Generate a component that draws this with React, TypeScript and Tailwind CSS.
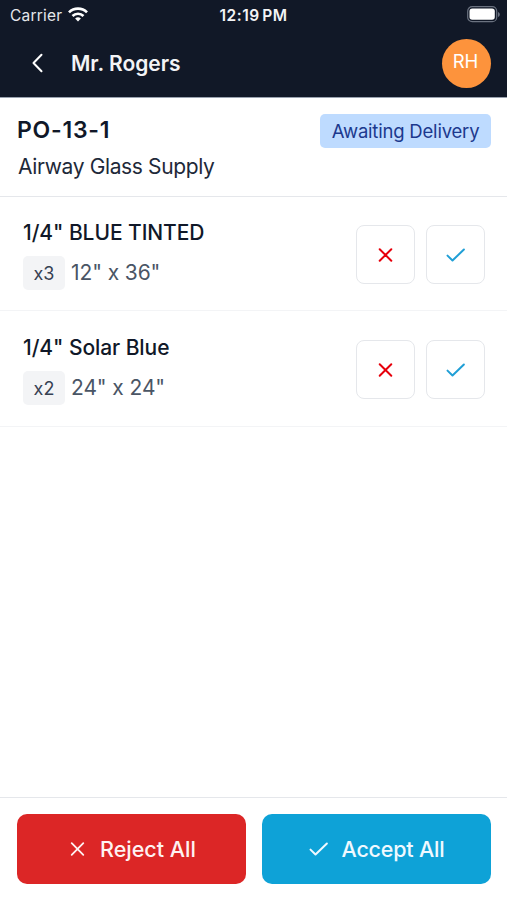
import React from 'react';

interface LineItem {
  id: number;
  name: string;
  qty: number;
  size: string;
}

const items: LineItem[] = [
  { id: 1, name: '1/4" BLUE TINTED', qty: 3, size: '12" x 36"' },
  { id: 2, name: '1/4" Solar Blue', qty: 2, size: '24" x 24"' },
];

interface IconProps {
  className?: string;
}

function CrossIcon({ className }: IconProps) {
  return (
    <svg viewBox="0 0 16 16" fill="none" stroke="currentColor" strokeLinecap="round" className={className}>
      <path d="M1.700 2.200l11.600 11.600M13.300 2.200L1.700 13.800" />
    </svg>
  );
}

function CheckIcon({ className }: IconProps) {
  return (
    <svg
      viewBox="0 0 20 16"
      fill="none"
      stroke="currentColor"
      strokeLinecap="round"
      strokeLinejoin="round"
      className={className}
    >
      <path d="M1.500 8.600l5 4.900L17.900 2.500" />
    </svg>
  );
}

function StatusBar() {
  return (
    <div className="grid h-[30px] grid-cols-3 items-center pl-[10px] pr-[7px] text-gray-200">
      <div className="flex items-center gap-[6px]">
        <span className="pt-px text-[15.5px] leading-none tracking-[0.2px]">Carrier</span>
        <svg viewBox="0 0 20 15" className="-mt-[2px] h-[15px] w-[20px]" fill="none" stroke="white" strokeWidth="2.7">
          <path d="M1 5.4a12.8 12.8 0 0 1 18 0" />
          <path d="M4.5 9a7.8 7.8 0 0 1 11 0" />
          <path d="M10 14.6l-2.9-3a4.1 4.1 0 0 1 5.8 0z" fill="white" stroke="none" />
        </svg>
      </div>
      <span className="-ml-[3px] whitespace-nowrap pt-px text-center text-[15.5px] font-semibold leading-none tracking-[0.55px] text-gray-100 [word-spacing:-2px]">
        12:19 PM
      </span>
      <svg viewBox="0 0 33 17" className="-mt-[2px] h-[17px] w-[33px] justify-self-end">
        <rect x="0.7" y="0.7" width="29" height="15" rx="4.5" fill="none" stroke="#6b7280" strokeWidth="1.2" />
        <rect x="2.5" y="2.6" width="25.3" height="11.2" rx="2.8" fill="white" />
        <path d="M31 6v5c1.2-.5 1.8-1.4 1.8-2.5S32.200 6.500 31 6z" fill="#6b7280" />
      </svg>
    </div>
  );
}

function NavBar() {
  return (
    <div className="flex h-[67px] items-center pb-px pl-[31px] pr-4">
      <svg
        viewBox="0 0 12 20"
        className="h-5 w-3 text-white"
        fill="none"
        stroke="currentColor"
        strokeWidth="2"
        strokeLinecap="round"
        strokeLinejoin="round"
      >
        <path d="M10.500 1.800L2.500 10l8 8.200" />
      </svg>
      <h1 className="ml-[28px] flex-1 text-[21px] font-semibold leading-none text-gray-100">Mr. Rogers</h1>
      <div className="flex h-[49px] w-[49px] items-center justify-center rounded-full bg-[#fd933c] pb-[3px] pr-[2px] text-[18.5px] leading-none text-white">
        RH
      </div>
    </div>
  );
}

function ItemRow({ item }: { item: LineItem }) {
  return (
    <li className="flex h-[115px] items-start justify-between border-b border-gray-100 pl-[23px] pr-[22px] pt-[23px] last:h-[116px]">
      <div>
        <p className="text-[21px] font-medium leading-[28px] tracking-[-0.07px] text-gray-900">{item.name}</p>
        <div className="mt-[9px] flex items-center gap-[6px]">
          <span className="flex h-[34px] w-[42px] items-center justify-center rounded-[5px] bg-gray-100 text-[18px] text-gray-700">
            x{item.qty}
          </span>
          <span className="pb-px text-[21px] leading-none tracking-[-0.1px] text-gray-600">{item.size}</span>
        </div>
      </div>
      <div className="flex gap-[11px] pt-[6px]">
        <button
          aria-label="Reject"
          className="flex h-[59px] w-[59px] items-center justify-center rounded-lg border border-gray-200 text-red-600"
        >
          <CrossIcon className="h-4 w-4 stroke-2" />
        </button>
        <button
          aria-label="Accept"
          className="flex h-[59px] w-[59px] items-center justify-center rounded-lg border border-gray-200 text-[#209fd6]"
        >
          <CheckIcon className="h-4 w-5 stroke-2" />
        </button>
      </div>
    </li>
  );
}

export default function App() {
  return (
    <div className="flex h-[900px] w-[507px] flex-col overflow-hidden bg-white font-['Inter','Liberation_Sans',sans-serif]">
      <header className="h-[98px] shrink-0 border-b border-gray-400 bg-[#111827]">
        <StatusBar />
        <NavBar />
      </header>

      <section className="flex h-[99px] shrink-0 items-start justify-between border-b border-gray-200 pl-[17px] pr-4 pt-4">
        <div>
          <h2 className="text-[23px] font-semibold leading-[32px] tracking-[0.75px] text-gray-900">PO-13-1</h2>
          <p className="mt-[7px] pl-px text-[21px] leading-[28px] tracking-[-0.36px] text-gray-800">
            Airway Glass Supply
          </p>
        </div>
        <span className="flex h-[34px] w-[171px] items-center justify-center rounded-[5px] bg-blue-200 pt-px text-[18.5px] tracking-[-0.2px] text-blue-900">
          Awaiting Delivery
        </span>
      </section>

      <ul className="-mt-px flex-1">
        {items.map((item) => (
          <ItemRow key={item.id} item={item} />
        ))}
      </ul>

      <footer className="grid h-[103px] shrink-0 grid-cols-2 items-start gap-4 border-t border-gray-200 pl-[17px] pr-4 pt-4">
        <button className="flex h-[70px] items-center justify-center gap-[14px] rounded-[10px] bg-[#dc2626] pl-[3px] text-[21.5px] font-medium text-red-50">
          <CrossIcon className="h-4 w-4 stroke-[1.8]" />
          <span>Reject All</span>
        </button>
        <button className="flex h-[70px] items-center justify-center gap-[13px] rounded-[10px] bg-[#0ea2d7] text-[21.5px] font-medium text-sky-50">
          <CheckIcon className="h-4 w-5 stroke-2" />
          <span className="tracking-[-0.2px]">Accept All</span>
        </button>
      </footer>
    </div>
  );
}
